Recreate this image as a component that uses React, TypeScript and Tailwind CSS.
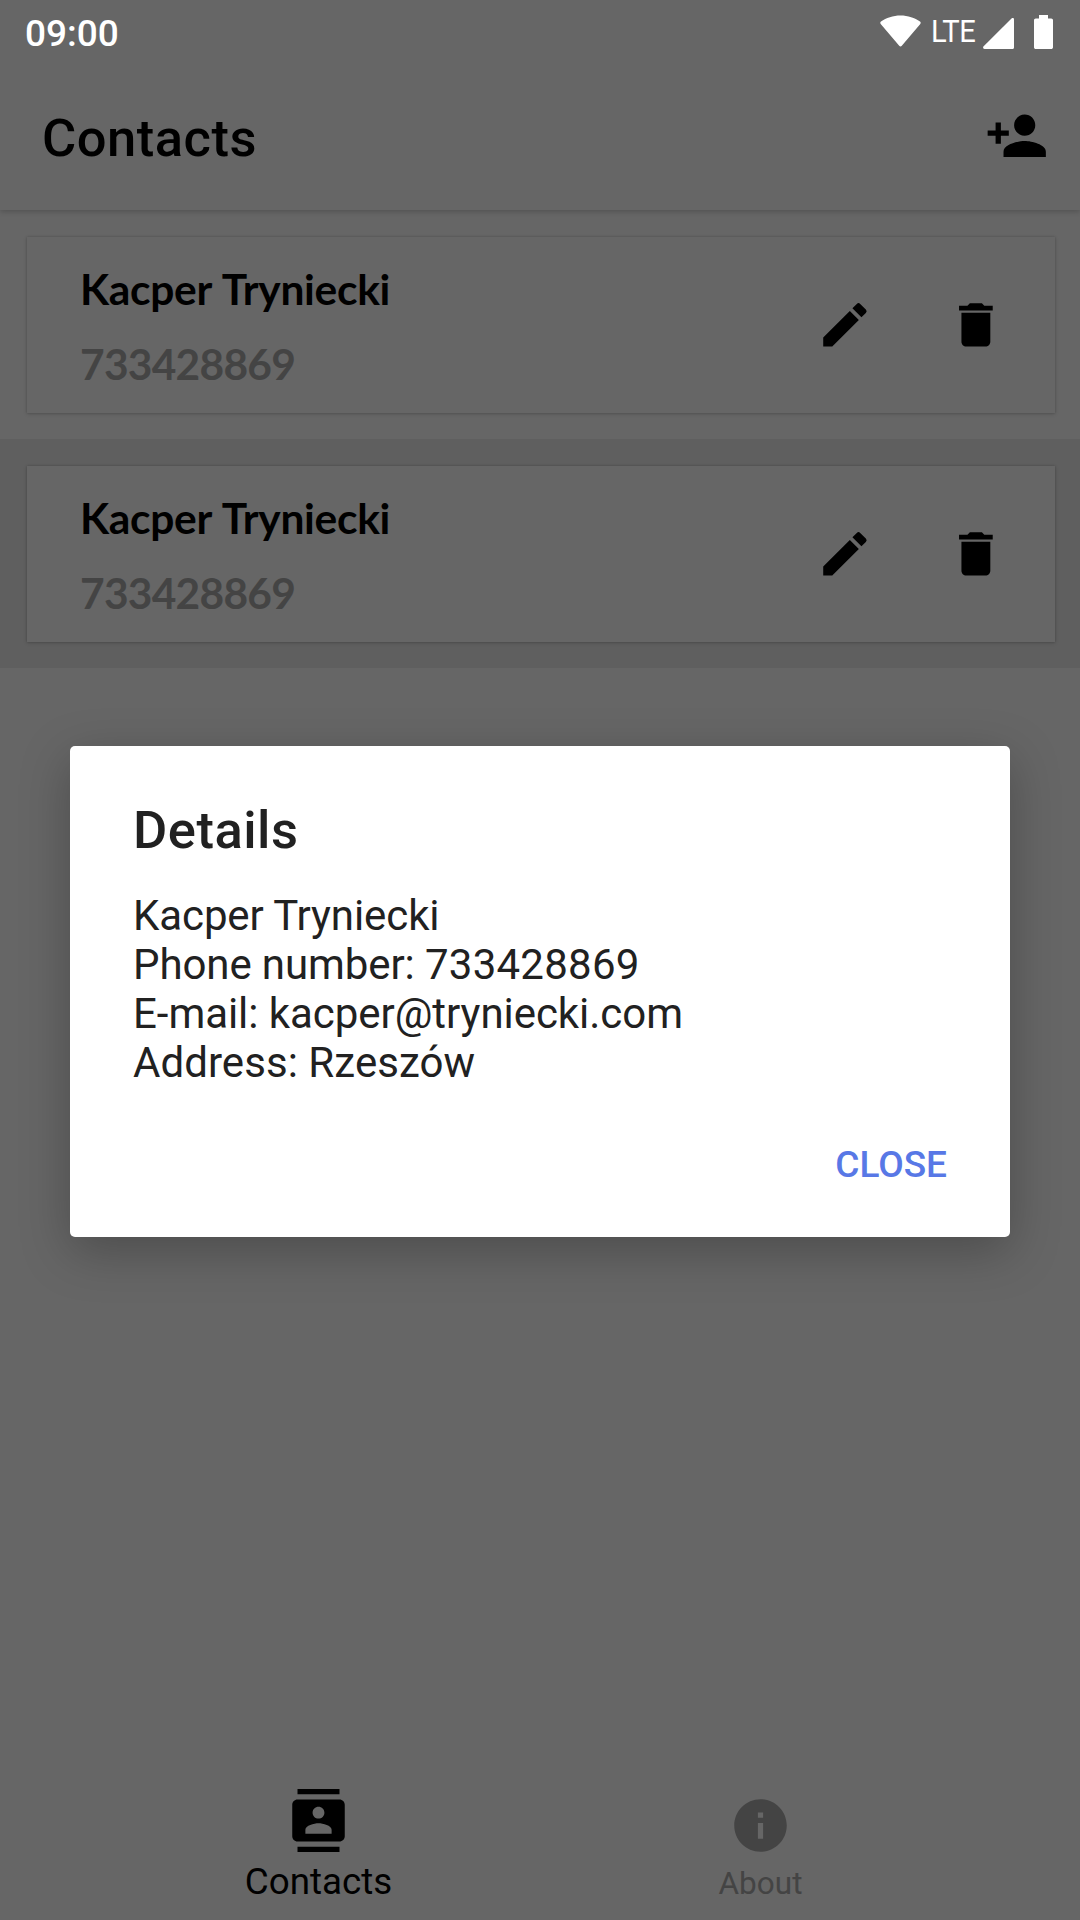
import React from "react";

function PersonAddIcon() {
  return (
    <svg viewBox="0 0 24 24" className="mb-[2px] size-[63.5px]" fill="#000">
      <path d="M15 12c2.210 0 4-1.790 4-4s-1.790-4-4-4-4 1.790-4 4 1.790 4 4 4zm-9-2V7H4v3H1v2h3v3h2v-3h3v-2H6zm9 4c-2.670 0-8 1.340-8 4v2h16v-2c0-2.660-5.330-4-8-4z" />
    </svg>
  );
}

function PencilIcon() {
  return (
    <svg viewBox="0 0 24 24" className="size-[57.75px]" fill="#000">
      <path d="M3 17.25V21h3.75L17.81 9.94l-3.75-3.75L3 17.25zM20.71 7.04a.996.996 0 0 0 0-1.41l-2.34-2.34a.996.996 0 0 0-1.41 0l-1.83 1.83 3.75 3.75 1.83-1.83z" />
    </svg>
  );
}

function TrashIcon() {
  return (
    <svg viewBox="0 0 24 24" className="size-[57.75px]" fill="#000">
      <path d="M6 19c0 1.1.9 2 2 2h8c1.1 0 2-.9 2-2V7H6v12zM19 4h-3.5l-1-1h-5l-1 1H5v2h14V4z" />
    </svg>
  );
}

function ContactsIcon() {
  return (
    <svg viewBox="0 0 24 24" className="size-[63px]" fill="#000">
      <path d="M20 0H4v2h16V0zM4 24h16v-2H4v2zM20 4H4c-1.1 0-2 .9-2 2v12c0 1.1.9 2 2 2h16c1.1 0 2-.9 2-2V6c0-1.1-.9-2-2-2zm-8 2.75c1.240 0 2.250 1.010 2.250 2.250s-1.010 2.250-2.250 2.250S9.750 10.240 9.750 9 10.760 6.750 12 6.750zM17 17H7v-1.500c0-1.670 3.330-2.500 5-2.500s5 .83 5 2.500V17z" />
    </svg>
  );
}

function InfoIcon() {
  return (
    <svg viewBox="0 0 24 24" className="size-[63px]" fill="#444">
      <path d="M12 2C6.480 2 2 6.480 2 12s4.480 10 10 10 10-4.480 10-10S17.520 2 12 2zm1 15h-2v-6h2v6zm0-8h-2V7h2v2z" />
    </svg>
  );
}

function StatusIcons() {
  return (
    <div className="flex h-[35px] items-end">
      <svg viewBox="0 0 41 33" className="mb-[2px] h-[32px] w-[41px]" preserveAspectRatio="none" fill="#fff">
        <path d="M20.500 0.500C13 0.500 6.200 2.900 1 6.800c-.8.6-.9 1.600-.3 2.400l18.500 22.500c.7.9 1.900.9 2.600 0L40.300 9.200c.6-.8.5-1.800-.3-2.400C34.800 2.900 28 .5 20.500.5z" />
      </svg>
      <span className="ml-[9.500px] h-[35px] w-[52.5px] origin-left scale-x-[0.91] text-[32px] leading-[35px] tracking-[-0.5px]">
        LTE
      </span>
      <svg viewBox="0 0 31 31" className="size-[31px]" fill="#fff">
        <path d="M31 1.300v28.200c0 .9-.6 1.500-1.500 1.500H1.500C.2 31-.3 29.500.4 28.500L28.500.6C29.500-.3 31 .1 31 1.300z" />
      </svg>
      <svg viewBox="0 0 19 34" className="ml-[20px] h-[34px] w-[19px]" fill="#fff">
        <path d="M5 0h9v3.500h3.200c1 0 1.800.8 1.800 1.800v26.900c0 1-.8 1.800-1.800 1.800H1.800C.8 34 0 33.200 0 32.200V5.300c0-1 .8-1.800 1.800-1.800H5V0z" />
      </svg>
    </div>
  );
}

function ContactCard({ active = false }: { active?: boolean }) {
  return (
    <div className={active ? "h-[229px] bg-[#5f5f5f] pl-[27px] pr-[25px] pt-[27px]" : "h-[229px] pl-[27px] pr-[25px] pt-[27px]"}>
      <div className="flex h-[176px] items-center bg-[#666666] pl-[53px] pr-[50px] shadow-[0_1px_4px_rgba(0,0,0,0.16),0_0_2px_rgba(0,0,0,0.18)]">
        <div className="grow pt-[2px] font-['Lato',sans-serif] text-[42.5px] font-bold leading-[52px]">
          <div className="tracking-[-0.3px] text-black [word-spacing:2px]">Kacper Tryniecki</div>
          <div className="mt-[23px] tracking-[-0.75px] text-[#444]">733428869</div>
        </div>
        <PencilIcon />
        <div className="w-[74px]" />
        <TrashIcon />
      </div>
    </div>
  );
}

export default function App() {
  return (
    <div className="relative flex h-[1920px] w-[1080px] flex-col overflow-hidden bg-[#666666] font-['Roboto',sans-serif]">
      <div className="shrink-0 shadow-[0_2px_5px_rgba(0,0,0,0.18)]">
        <div className="flex h-[63px] items-center pl-[25px] pr-[27px] text-white">
          <span className="grow pt-[4px] text-[37px] font-medium">09:00</span>
          <StatusIcons />
        </div>
        <header className="flex h-[147px] items-center pl-[42px] pr-[32px]">
          <h1 className="grow pt-[4px] text-[52.5px] font-medium tracking-[0.5px]">Contacts</h1>
          <PersonAddIcon />
        </header>
      </div>
      <main className="grow">
        <ContactCard />
        <ContactCard active />
      </main>
      <nav className="flex h-[147px] shrink-0 pl-[98px]">
        <div className="flex w-[441px] flex-col items-center pt-[16px]">
          <ContactsIcon />
          <span className="mt-[8px] text-[36.75px] leading-[43px] text-black">Contacts</span>
        </div>
        <div className="flex w-[443px] flex-col items-center pt-[21px]">
          <InfoIcon />
          <span className="mt-[8px] text-[31.5px] leading-[37px] text-[#444]">About</span>
        </div>
      </nav>
      <div className="absolute left-[70px] top-[746px] h-[491px] w-[940px] rounded-[5px] bg-white px-[63px] pt-[52px] text-[#212121] shadow-[0_14px_50px_rgba(0,0,0,0.26)]">
        <h2 className="text-[52.5px] font-medium leading-[64px] tracking-[0.5px]">Details</h2>
        <div className="mt-[29px] text-[42px] leading-[49px]">
          <p className="tracking-[-0.1px]">Kacper Tryniecki</p>
          <p className="tracking-[-0.1px]">
            Phone number: <span className="tracking-[0.25px]">733428869</span>
          </p>
          <p className="tracking-[-0.05px]">E-mail: kacper@tryniecki.com</p>
          <p className="tracking-[0.06px]">Address: Rzeszów</p>
        </div>
        <div className="mt-[50px] text-right text-[37px] font-medium text-[#5878e6]">CLOSE</div>
      </div>
    </div>
  );
}
